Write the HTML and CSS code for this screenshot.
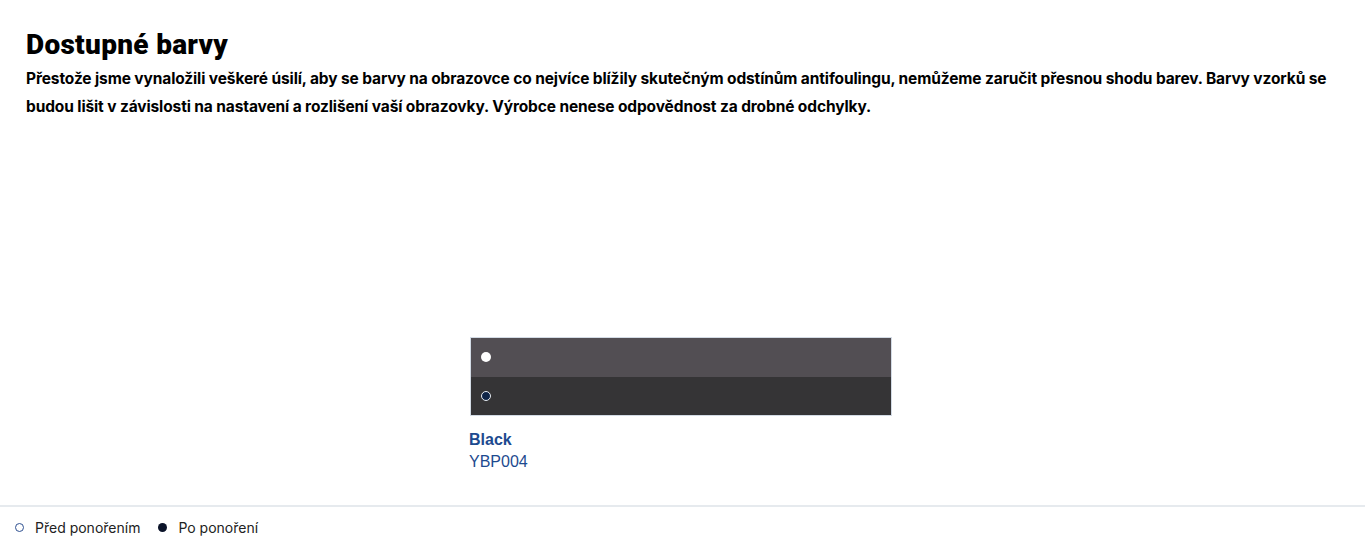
FILE: index.html
```html
<!DOCTYPE html>
<html lang="cs">
<head>
<meta charset="utf-8">
<title>Dostupné barvy</title>
<link rel="stylesheet" href="styles.css">
</head>
<body>
<main class="page">
  <section class="intro">
    <h1 class="title">Dostupné barvy</h1>
    <p class="lead">Přestože jsme vynaložili veškeré úsilí, aby se barvy na obrazovce co nejvíce blížily skutečným odstínům antifoulingu, nemůžeme zaručit přesnou shodu barev. Barvy vzorků se budou lišit v závislosti na nastavení a rozlišení vaší obrazovky. Výrobce nenese odpovědnost za drobné odchylky.</p>
  </section>
  <section class="swatches">
    <div class="swatch-card">
      <div class="swatch">
        <div class="band band-before"><span class="dot dot-before"></span></div>
        <div class="band band-after"><span class="dot dot-after"></span></div>
      </div>
      <div class="swatch-name">Black</div>
      <div class="swatch-code">YBP004</div>
    </div>
  </section>
  <footer class="legend">
    <span class="legend-item"><span class="legend-dot legend-before"></span>Před ponořením</span>
    <span class="legend-item"><span class="legend-dot legend-after"></span>Po ponoření</span>
  </footer>
</main>
</body>
</html>
```

FILE: styles.css
```css
* { box-sizing: border-box; }
html, body { margin: 0; padding: 0; background: #fff; }
body { font-family: Inter, "Noto Sans", sans-serif; color: #000; }
.page { display: flex; flex-direction: column; height: 547px; }
.intro { padding: 28px 26px 0 26px; }
.title {
  margin: 0 0 3px 0;
  font-family: Roboto, Inter, sans-serif;
  font-size: 28px;
  line-height: 34px;
  font-weight: 900;
  letter-spacing: 0.3px;
}
.lead {
  margin: 0;
  font-size: 15.5px;
  line-height: 28px;
  font-weight: 700;
  letter-spacing: -0.12px;
}
.swatches {
  flex: 1;
  display: flex;
  justify-content: center;
  padding: 0 3px 0 0;
}
.swatch-card { width: 422px; padding-top: 216px; }
.swatch {
  border: 1px solid #d3dbe5;
  display: flex;
  flex-direction: column;
  height: 79px;
}
.band { flex: 1; display: flex; align-items: center; padding-left: 10px; }
.band-before { background: #524e53; }
.band-after { background: #353436; }
.dot { width: 10px; height: 10px; border-radius: 50%; display: block; }
.dot-before { background: #fff; }
.dot-after { background: #0f2447; border: 1px solid #e8ecf2; }
.swatch-name {
  margin-top: 13px;
  margin-left: -1px;
  font-family: "Liberation Sans", Arial, sans-serif;
  font-weight: 700;
  font-size: 16px;
  line-height: 22px;
  color: #1d4a8f;
}
.swatch-code {
  margin-left: -1px;
  font-family: "Liberation Sans", Arial, sans-serif;
  font-size: 16px;
  line-height: 22px;
  color: #1d4a8f;
}
.legend {
  border-top: 2px solid #e6eaee;
  height: 42px;
  display: flex;
  align-items: center;
  gap: 18px;
  padding-left: 15px;
  font-size: 14px;
  color: #222;
}
.legend-item { display: flex; align-items: center; gap: 11px; }
.legend-dot { width: 9px; height: 9px; border-radius: 50%; display: block; }
.legend-before { border: 1.5px solid #2f5191; background: #fff; }
.legend-after { background: #0b1329; }
```
